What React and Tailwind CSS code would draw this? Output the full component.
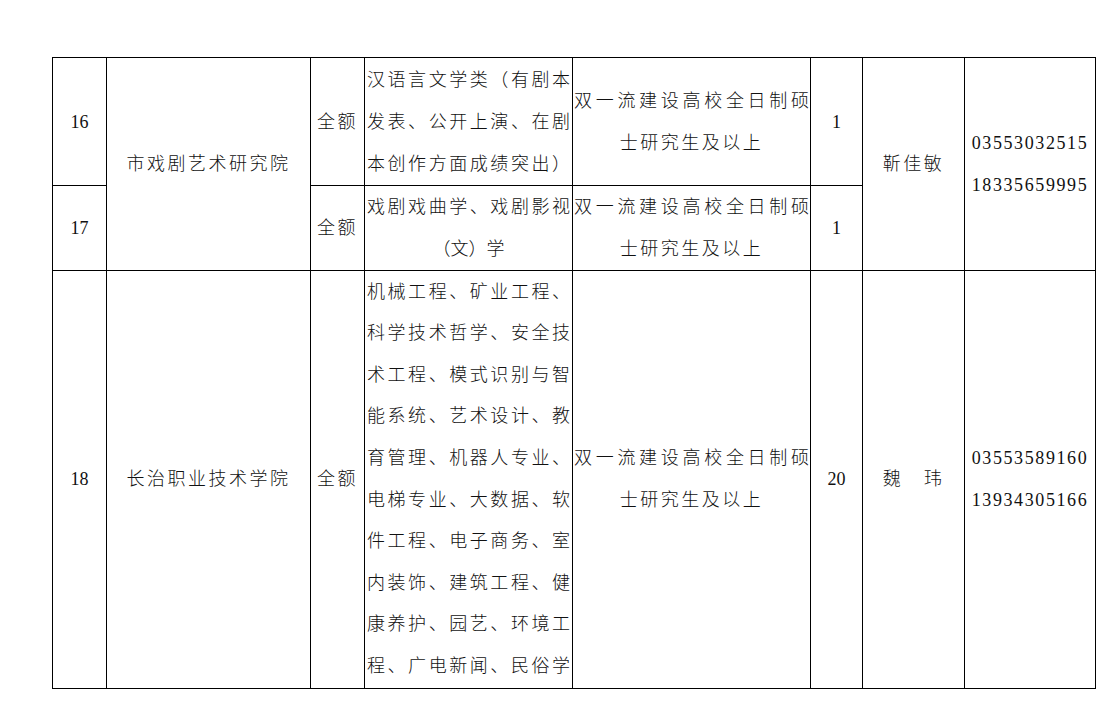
export default function App() {
  const font = { fontFamily: '"Liberation Serif", "Noto Sans CJK SC", serif' }
  const cell = 'border border-black align-middle text-center p-0'
  const full = 'whitespace-nowrap [text-align-last:justify] text-justify'

  return (
    <main className="min-h-screen bg-white pt-[57px] pl-[52px]" style={font}>
      <table className="table-fixed border-collapse text-[18px] leading-[42px] text-[#111] font-light w-[1044px]">
        <colgroup>
          <col className="w-[54px]" />
          <col className="w-[204px]" />
          <col className="w-[54px]" />
          <col className="w-[208px]" />
          <col className="w-[238px]" />
          <col className="w-[52px]" />
          <col className="w-[102px]" />
          <col className="w-[131px]" />
        </colgroup>
        <tbody>
          <tr className="h-[128px]">
            <td className={cell}>16</td>
            <td className={`${cell} tracking-[2.5px]`} rowSpan={2}>市戏剧艺术研究院</td>
            <td className={`${cell} tracking-[2.5px]`}>全额</td>
            <td className={`${cell} px-[2px]`}>
              <div className={full}>汉语言文学类（有剧本</div>
              <div className={full}>发表、公开上演、在剧</div>
              <div className={full}>本创作方面成绩突出）</div>
            </td>
            <td className={`${cell} px-[1px]`}>
              <div className={full}>双一流建设高校全日制硕</div>
              <div className="tracking-[2.5px]">士研究生及以上</div>
            </td>
            <td className={cell}>1</td>
            <td className={`${cell} tracking-[2.5px]`} rowSpan={2}>靳佳敏</td>
            <td className={`${cell} tracking-[1.6px]`} rowSpan={2}>
              <div>03553032515</div>
              <div>18335659995</div>
            </td>
          </tr>
          <tr className="h-[85px]">
            <td className={cell}>17</td>
            <td className={`${cell} tracking-[2.5px]`}>全额</td>
            <td className={`${cell} px-[2px]`}>
              <div className={full}>戏剧戏曲学、戏剧影视</div>
              <div>（文）学</div>
            </td>
            <td className={`${cell} px-[1px]`}>
              <div className={full}>双一流建设高校全日制硕</div>
              <div className="tracking-[2.5px]">士研究生及以上</div>
            </td>
            <td className={cell}>1</td>
          </tr>
          <tr className="h-[418px] leading-[41.6px]">
            <td className={cell}>18</td>
            <td className={`${cell} tracking-[2.5px]`}>长治职业技术学院</td>
            <td className={`${cell} tracking-[2.5px]`}>全额</td>
            <td className={`${cell} px-[2px]`}>
              <div className={full}>机械工程、矿业工程、</div>
              <div className={full}>科学技术哲学、安全技</div>
              <div className={full}>术工程、模式识别与智</div>
              <div className={full}>能系统、艺术设计、教</div>
              <div className={full}>育管理、机器人专业、</div>
              <div className={full}>电梯专业、大数据、软</div>
              <div className={full}>件工程、电子商务、室</div>
              <div className={full}>内装饰、建筑工程、健</div>
              <div className={full}>康养护、园艺、环境工</div>
              <div className={full}>程、广电新闻、民俗学</div>
            </td>
            <td className={`${cell} px-[1px]`}>
              <div className={full}>双一流建设高校全日制硕</div>
              <div className="tracking-[2.5px]">士研究生及以上</div>
            </td>
            <td className={cell}>20</td>
            <td className={`${cell} tracking-[2.5px]`}>魏　玮</td>
            <td className={`${cell} tracking-[1.6px]`}>
              <div>03553589160</div>
              <div>13934305166</div>
            </td>
          </tr>
        </tbody>
      </table>
    </main>
  )
}
